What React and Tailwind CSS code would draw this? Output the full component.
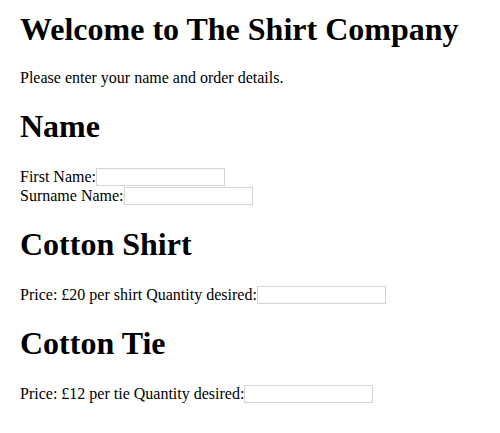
import React from 'react';

const Field = ({ label }) => (
  <div className="flex items-end h-[18px]">
    <span className="leading-[18px]">{label}</span>
    <input type="text" className="w-[129px] h-[18px] border border-[#d4d4d4] bg-white outline-none" />
  </div>
);

const Section = ({ title, children, top = 'mt-[21px]' }) => (
  <section>
    <h2 className={`${top} text-[32px] leading-[36px] font-bold`}>{title}</h2>
    <div className="mt-[24px]">{children}</div>
  </section>
);

export default function App() {
  return (
    <div
      className="h-[433px] overflow-hidden bg-white text-black px-5 pt-[11px] text-[16px]"
      style={{ fontFamily: '"Liberation Serif", "Times New Roman", serif' }}
    >
      <h1 className="text-[32px] leading-[36px] font-bold">Welcome to The Shirt Company</h1>
      <p className="mt-[22px] leading-[18px]">Please enter your name and order details.</p>

      <Section title="Name">
        <div className="flex flex-col gap-[1px]">
          <Field label="First Name:" />
          <Field label="Surname Name:" />
        </div>
      </Section>

      <Section title="Cotton Shirt">
        <Field label="Price: £20 per shirt Quantity desired:" />
      </Section>

      <Section title="Cotton Tie">
        <Field label="Price: £12 per tie Quantity desired:" />
      </Section>

      <Section title="Order Summary" top="mt-[23px]">
        <Field label="Total:" />
      </Section>
    </div>
  );
}
